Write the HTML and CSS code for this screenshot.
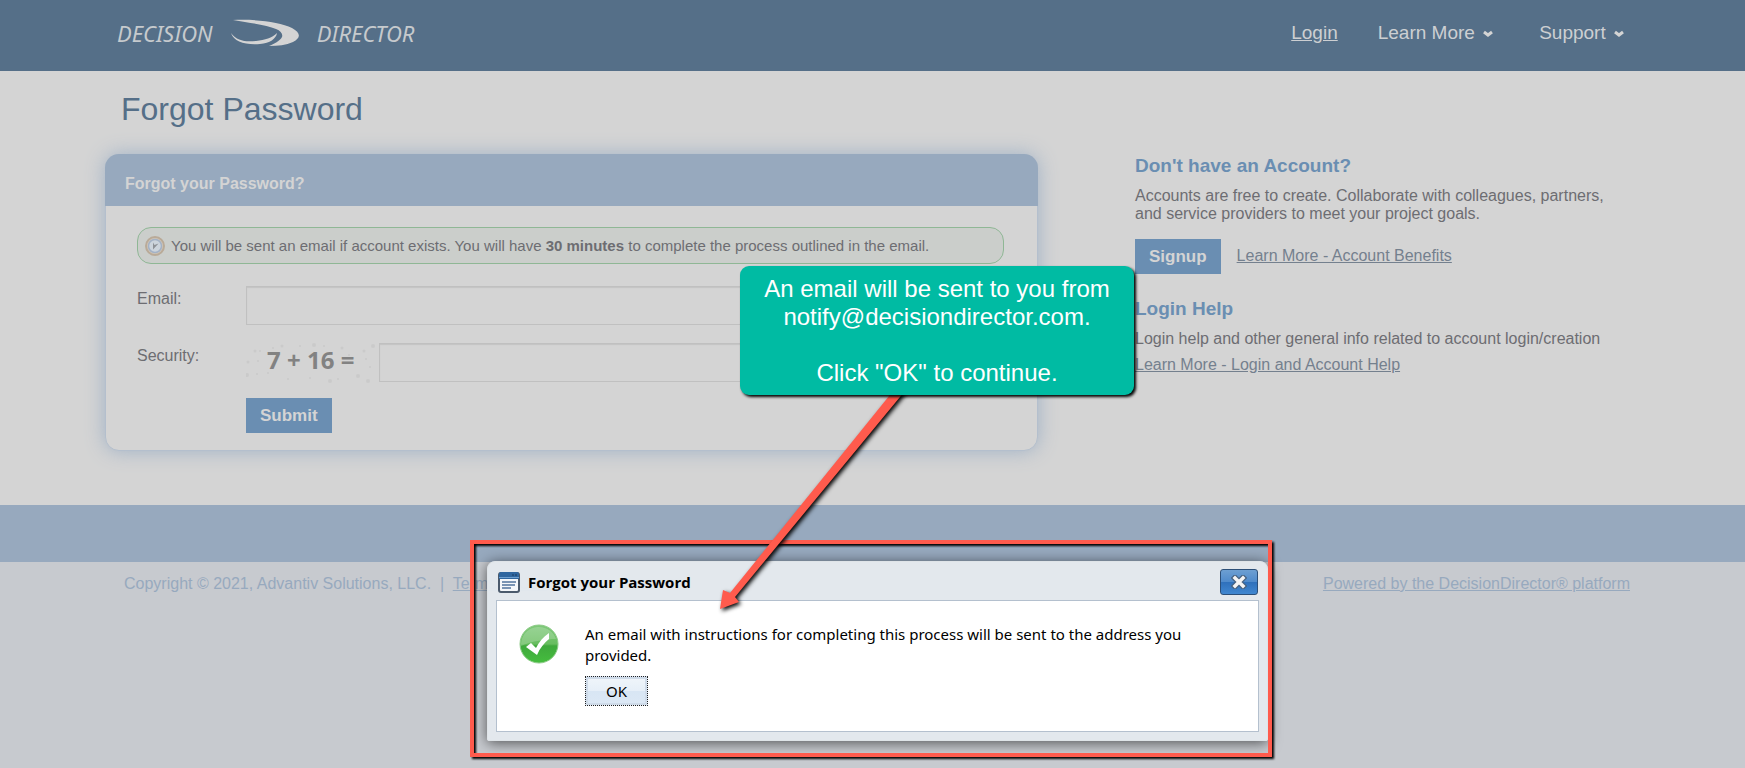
FILE: index.html
```html
<!DOCTYPE html>
<html lang="en">
<head>
    <meta charset="UTF-8">
    <meta name="viewport" content="width=device-width, initial-scale=1.0">
    <title>Forgot Password - Decision Director</title>
    <link rel="stylesheet" href="styles.css">
</head>
<body>
    <header class="site-header">
        <div class="container header-inner">
            <a href="#" class="logo">
                <span>DECISION</span>
                <svg class="logo-swoosh" width="70" height="28" viewBox="0 0 70 28" aria-hidden="true">
                    <path d="M3 1C27 0 50 3 62 9c9 5 9 10 1 14-7 3-15 4-24 4 5-2 11-5 13-9 1-3-1-6-6-8C37 6 20 4 3 1z"/>
                    <path d="M1 14c6 8 14 9 25 8 9-1 16-3 21-8-1 6-7 10-17 11C15 26 4 23 1 14z"/>
                </svg>
                <span>DIRECTOR</span>
            </a>
            <nav class="main-nav">
                <a href="#" class="active">Login</a>
                <a href="#">Learn More <svg class="caret" width="10" height="7" viewBox="0 0 10 7"><path d="M1 2 5 5 9 2"/></svg></a>
                <a href="#">Support <svg class="caret" width="10" height="7" viewBox="0 0 10 7"><path d="M1 2 5 5 9 2"/></svg></a>
            </nav>
        </div>
    </header>

    <main class="container">
        <h1>Forgot Password</h1>
        <div class="columns">
            <section class="panel">
                <h2 class="panel-heading">Forgot your Password?</h2>
                <form class="panel-body">
                    <div class="notice">
                        <svg width="20" height="20" viewBox="0 0 20 20" aria-hidden="true">
                            <circle cx="10" cy="10" r="9" fill="#d0c6b8" stroke="#b9aa98" stroke-width="2"/>
                            <circle cx="10" cy="10" r="6.500" fill="#ccd4dc" stroke="#a3b2c6" stroke-width="1.500"/>
                            <path d="M8 6.500v7l5.500-6L9.500 9z" fill="#8d9196"/>
                        </svg>
                        <span>You will be sent an email if account exists. You will have <b>30 minutes</b> to complete the process outlined in the email.</span>
                    </div>
                    <div class="form-row">
                        <label for="email">Email:</label>
                        <input type="text" id="email">
                    </div>
                    <div class="form-row">
                        <label for="security">Security:</label>
                        <div class="captcha">
                            <svg class="captcha-noise" width="130" height="40" viewBox="0 0 130 40" aria-hidden="true">
                                <g fill="#cacaca">
                                    <circle cx="9" cy="8" r="1.500"/><circle cx="14" cy="8" r="1"/><circle cx="2" cy="19" r="1.500"/>
                                    <circle cx="12" cy="18" r="1"/><circle cx="1" cy="32" r="2"/><circle cx="11" cy="31" r="1"/>
                                    <circle cx="36" cy="3" r="1.500"/><circle cx="54" cy="3" r="1"/><circle cx="68" cy="2" r="2"/>
                                    <circle cx="78" cy="3" r="1"/><circle cx="96" cy="5" r="1.500"/><circle cx="118" cy="8" r="1.500"/>
                                    <circle cx="127" cy="3" r="2"/><circle cx="120" cy="16" r="1"/><circle cx="124" cy="24" r="1"/>
                                    <circle cx="112" cy="33" r="2"/><circle cx="122" cy="38" r="2"/><circle cx="84" cy="38" r="2"/>
                                    <circle cx="92" cy="36" r="1"/><circle cx="64" cy="35" r="1"/><circle cx="42" cy="36" r="1"/>
                                    <circle cx="27" cy="5" r="1"/><circle cx="22" cy="30" r="1"/><circle cx="103" cy="12" r="1"/>
                                </g>
                            </svg>
                            <span>7 + 16 =</span>
                        </div>
                        <input type="text" id="security">
                    </div>
                    <div class="form-row">
                        <button type="submit" class="btn">Submit</button>
                    </div>
                </form>
            </section>

            <aside class="sidebar">
                <h3>Don't have an Account?</h3>
                <p>Accounts are free to create. Collaborate with colleagues, partners, and service providers to meet your project goals.</p>
                <div class="signup">
                    <button type="button" class="btn">Signup</button>
                    <a href="#">Learn More - Account Benefits</a>
                </div>
                <h3>Login Help</h3>
                <p>Login help and other general info related to account login/creation</p>
                <a href="#" class="help-link">Learn More - Login and Account Help</a>
            </aside>
        </div>
    </main>

    <div class="band"></div>

    <footer class="container site-footer">
        <div>Copyright © 2021, Advantiv Solutions, LLC. &nbsp;|&nbsp; <a href="#">Terms of Use</a></div>
        <a href="#">Powered by the DecisionDirector® platform</a>
    </footer>

    <!-- Confirmation dialog -->
    <div class="dialog" role="dialog" aria-labelledby="dialogTitle">
        <div class="dialog-header">
            <svg width="22" height="21" viewBox="0 0 22 21" aria-hidden="true">
                <rect x="1" y="1" width="20" height="19" rx="2" fill="#f4f7fa" stroke="#4b5a6c" stroke-width="2"/>
                <path d="M1 2a2 2 0 0 1 2-2h16a2 2 0 0 1 2 2v5H1z" fill="#2f669f"/>
                <path d="M1 5h20v1H1z" fill="#6fa0cf"/>
                <path d="M14 3h2M17 3h2" stroke="#183a60" stroke-width="1"/>
                <path d="M4 10h14M4 13h13M4 16h9" stroke="#50749d" stroke-width="1.500"/>
            </svg>
            <h2 id="dialogTitle">Forgot your Password</h2>
            <button type="button" class="dialog-close" aria-label="Close">
                <svg width="16" height="14" viewBox="0 0 16 14"><path d="M4 3l8 8M12 3l-8 8" stroke="#46617f" stroke-width="6" stroke-linecap="square"/><path d="M4 3l8 8M12 3l-8 8" stroke="#f4f4f4" stroke-width="3.500" stroke-linecap="square"/></svg>
            </button>
        </div>
        <div class="dialog-content">
            <svg class="dialog-check" width="40" height="40" viewBox="0 0 40 40" aria-hidden="true">
                <defs>
                    <linearGradient id="green" x1="0" y1="0" x2="0" y2="1">
                        <stop offset="0" stop-color="#7fc97a"/>
                        <stop offset="0.500" stop-color="#68bd5f"/>
                        <stop offset="0.550" stop-color="#3fa93c"/>
                        <stop offset="1" stop-color="#45bd3e"/>
                    </linearGradient>
                </defs>
                <circle cx="20" cy="20" r="19" fill="url(#green)" stroke="#8ccb86" stroke-width="1"/>
                <path d="M2 22C2 8 12 3 20 3s15 5 17 12c-10 0-24 2-35 7z" fill="#fff" opacity="0.200"/>
                <path d="M7 23l5-4 5 5c3-6 7-11 13-15v6c-5 4-9 9-12 16z" fill="#fff"/>
            </svg>
            <div>
                <p>An email with instructions for completing this process will be sent to the address you provided.</p>
                <button type="button" class="dialog-ok">OK</button>
            </div>
        </div>
    </div>

    <!-- Walkthrough annotations -->
    <div class="highlight"></div>
    <svg class="arrow" width="210" height="240" viewBox="0 0 210 240" aria-hidden="true">
        <path d="M192 0L20 213 13 210 10 229 29 222 25 217 204 0z"/>
    </svg>
    <div class="callout">An email will be sent to you from notify@decisiondirector.com.<br><br>Click "OK" to continue.</div>
</body>
</html>
```
FILE: styles.css
```css
* {
    margin: 0;
    padding: 0;
    box-sizing: border-box;
}

body {
    font-family: "Liberation Sans", Arial, sans-serif;
    font-size: 16px;
    line-height: 18px;
    color: #6d6d72;
    background: #c7cacf;
    min-height: 100vh;
}

button,
input {
    font-family: inherit;
    border-radius: 0;
}

.container {
    max-width: 1535px;
    margin: 0 auto;
}

.site-header {
    background: #556f88;
}

.header-inner {
    display: flex;
    justify-content: space-between;
    align-items: center;
    height: 71px;
    padding: 0 10px 6px 12px;
}

.logo {
    display: flex;
    align-items: center;
    gap: 17px;
    font-family: "Noto Sans", Verdana, sans-serif;
    font-size: 22px;
    font-style: italic;
    color: #c6cacd;
    text-decoration: none;
}

.logo-swoosh {
    fill: #d4d4d4;
}

.main-nav {
    display: flex;
    gap: 40px;
}

.main-nav a {
    font-size: 19px;
    color: #cdcfd2;
    text-decoration: none;
}

.main-nav a.active {
    text-decoration: underline;
}

.caret {
    margin: 0 6px 2px 3px;
    fill: none;
    stroke: #d4d4d4;
    stroke-width: 3;
}

main.container {
    position: relative;
    padding-bottom: 54px;
}

/* light page area runs the full window width behind the container */
main.container::before {
    content: "";
    position: absolute;
    z-index: -1;
    top: 0;
    bottom: 0;
    left: calc(50% - 50vw);
    width: 100vw;
    background: #d4d4d4;
}

h1 {
    padding: 20px 16px 27px;
    font-size: 32px;
    font-weight: normal;
    line-height: 36px;
    color: #556f88;
}

.columns {
    display: grid;
    grid-template-columns: minmax(0, 1fr) 505px;
    gap: 97px;
    align-items: start;
}

.panel {
    background: #d4d4d4;
    border: 1px solid #b4bfcd;
    border-radius: 14px;
    box-shadow: 0 0 20px #9fb1c6;
}

.panel-heading {
    margin: -1px -1px 0;
    padding: 21px 20px 13px;
    border-radius: 14px 14px 0 0;
    background: #97a9be;
    color: #d4d4d4;
    font-size: 16px;
}

.panel-body {
    padding: 21px 33px 17px 31px;
}

.notice {
    display: flex;
    align-items: center;
    gap: 6px;
    padding: 7px;
    margin-bottom: 22px;
    min-height: 37px;
    border: 1px solid #8fb795;
    border-radius: 14px;
    background: #cbcecb;
    font-size: 15px;
}

.form-row {
    display: flex;
    margin-bottom: 18px;
}

.form-row label {
    width: 109px;
    padding-top: 4px;
}

.form-row input {
    flex: 1;
    height: 39px;
    padding: 0 8px;
    border: 1px solid #c0c0c0;
    background: #d4d4d4;
    box-shadow: inset 0 1px 1px #c4c4c4;
    font-size: 16px;
}

.form-row:last-child {
    margin: -2px 0 0 109px;
}

.captcha {
    position: relative;
    width: 133px;
    padding: 8px 0 0 21px;
    font-family: "Noto Sans", sans-serif;
    font-size: 24px;
    font-weight: bold;
    color: #828282;
}

.captcha-noise {
    position: absolute;
    top: 0;
    left: 0;
}

.btn {
    height: 35px;
    padding: 0 14px;
    border: none;
    background: #6a8eb2;
    color: #d4d4d4;
    font-size: 17px;
    font-weight: bold;
    cursor: pointer;
}

.sidebar {
    padding: 1px 20px 0 0;
}

.sidebar h3 {
    margin-bottom: 10px;
    font-size: 19px;
    line-height: 22px;
    color: #6a8eb2;
}

.sidebar a {
    color: #74808e;
}

.signup {
    display: flex;
    gap: 16px;
    margin: 16px 0 24px;
}

.signup a {
    padding-top: 8px;
}

.help-link {
    display: inline-block;
    margin-top: 8px;
}

.band {
    height: 57px;
    background: #97a9be;
}

.site-footer {
    display: flex;
    justify-content: space-between;
    padding: 13px 10px 0 19px;
    color: #97a9be;
}

.site-footer a {
    color: #97a9be;
}

/* Dialog */
.dialog {
    position: absolute;
    top: 561px;
    left: 487px;
    width: 781px;
    padding: 0 8px 8px;
    border: 1px solid #dfe4e8;
    border-radius: 8px 8px 2px 2px;
    background: rgba(228, 233, 238, 0.96);
    box-shadow: 0 2px 14px rgba(0, 0, 0, 0.6);
    color: #000;
    font-family: "Noto Sans", "Segoe UI", sans-serif;
    font-size: 15px;
}

.dialog-header {
    display: flex;
    align-items: center;
    gap: 8px;
    height: 38px;
    padding: 2px 1px 0 2px;
}

.dialog-header h2 {
    flex: 1;
    font-family: "Open Sans", "Segoe UI", sans-serif;
    font-size: 15px;
}

.dialog-close {
    display: flex;
    align-items: center;
    justify-content: center;
    width: 38px;
    height: 26px;
    border: 1px solid #2c4f78;
    border-radius: 3px;
    background: linear-gradient(#6d9fd2, #4f8acb 50%, #2f70bb 50%, #4187d0);
    cursor: pointer;
}

.dialog-content {
    display: flex;
    gap: 26px;
    min-height: 132px;
    padding: 23px 60px 20px 22px;
    border: 1px solid #b4c0ce;
    background: #fff;
}

.dialog-check {
    flex-shrink: 0;
}

.dialog-content p {
    line-height: 21px;
}

.dialog-ok {
    width: 63px;
    height: 30px;
    margin-top: 10px;
    border: 1px dotted #222;
    background: linear-gradient(#f0f5fa, #e6eff8 50%, #d8e6f4 50%, #dce8f5);
    box-shadow: inset 0 0 0 2px #cfdbe9;
    color: #000;
    font-size: 15px;
    cursor: pointer;
}

/* Annotations */
.highlight {
    position: absolute;
    top: 540px;
    left: 470px;
    width: 802px;
    height: 217px;
    border: 4px solid #ff5b4d;
    filter: drop-shadow(2px 2px 1px #000);
    pointer-events: none;
}

.arrow {
    position: absolute;
    top: 380px;
    left: 710px;
    fill: #ff5b4d;
    filter: drop-shadow(2px 2px 2px #000);
    pointer-events: none;
}

.callout {
    position: absolute;
    top: 266px;
    left: 740px;
    width: 394px;
    padding: 9px 16px 8px;
    border-radius: 9px;
    background: #00bba3;
    box-shadow: 2px 2px 3px #000;
    color: #fff;
    font-size: 24px;
    line-height: 28px;
    text-align: center;
}
```
